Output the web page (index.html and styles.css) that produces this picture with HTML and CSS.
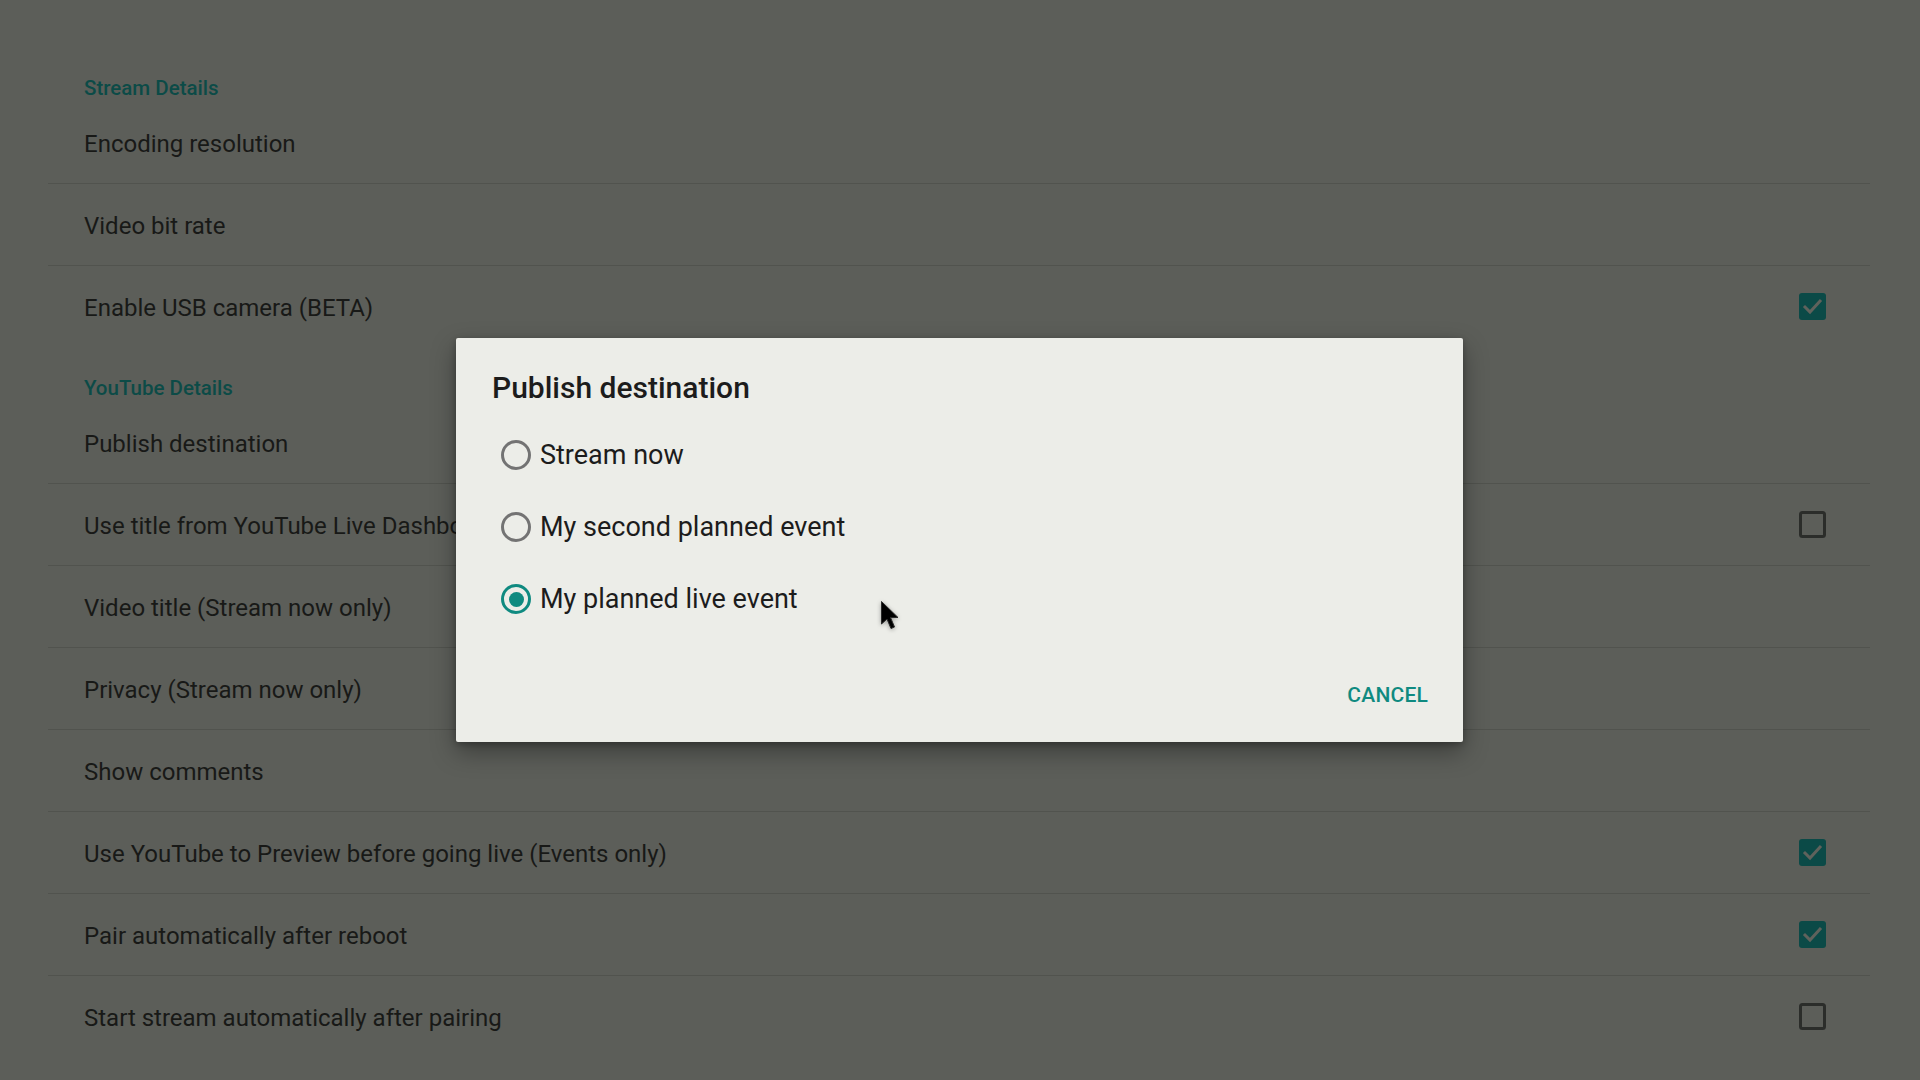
FILE: index.html
```html
<!DOCTYPE html>
<html>
<head>
<meta charset="utf-8">
<link rel="stylesheet" href="styles.css">
</head>
<body>
<div class="screen">
  <div class="prefs">
    <div class="category">Stream Details</div>
    <div class="row divided"><span class="label">Encoding resolution</span></div>
    <div class="row divided"><span class="label">Video bit rate</span></div>
    <div class="row"><span class="label">Enable USB camera (BETA)</span>
      <svg class="cb" width="27" height="27" viewBox="0 0 27 27"><rect x="0" y="0" width="27" height="27" rx="3" class="cb-fill"/><polyline points="6,14 11,19 21,8" class="cb-check"/></svg>
    </div>
    <div class="category">YouTube Details</div>
    <div class="row divided"><span class="label">Publish destination</span></div>
    <div class="row divided"><span class="label">Use title from YouTube Live Dashboard</span>
      <svg class="cb" width="27" height="27" viewBox="0 0 27 27"><rect x="1.5" y="1.5" width="24" height="24" rx="2" class="cb-empty"/></svg>
    </div>
    <div class="row divided"><span class="label">Video title (Stream now only)</span></div>
    <div class="row divided"><span class="label">Privacy (Stream now only)</span></div>
    <div class="row divided"><span class="label">Show comments</span></div>
    <div class="row divided"><span class="label">Use YouTube to Preview before going live (Events only)</span>
      <svg class="cb" width="27" height="27" viewBox="0 0 27 27"><rect x="0" y="0" width="27" height="27" rx="3" class="cb-fill"/><polyline points="6,14 11,19 21,8" class="cb-check"/></svg>
    </div>
    <div class="row divided"><span class="label">Pair automatically after reboot</span>
      <svg class="cb" width="27" height="27" viewBox="0 0 27 27"><rect x="0" y="0" width="27" height="27" rx="3" class="cb-fill"/><polyline points="6,14 11,19 21,8" class="cb-check"/></svg>
    </div>
    <div class="row"><span class="label">Start stream automatically after pairing</span>
      <svg class="cb" width="27" height="27" viewBox="0 0 27 27"><rect x="1.5" y="1.5" width="24" height="24" rx="2" class="cb-empty"/></svg>
    </div>
  </div>

  <div class="dialog">
    <div class="dialog-title">Publish destination</div>
    <div class="options">
      <div class="option"><span class="radio"></span><span class="opt-label">Stream now</span></div>
      <div class="option"><span class="radio"></span><span class="opt-label">My second planned event</span></div>
      <div class="option"><span class="radio checked"></span><span class="opt-label">My planned live event</span></div>
    </div>
    <div class="actions"><span class="btn">CANCEL</span></div>
  </div>

  <svg class="cursor" width="24" height="34" viewBox="0 0 24 34">
    <path d="M1.5 1.5 L1.5 24 L7 19 L11 28.5 L14.5 27 L10.5 17.5 L18 17.5 Z" fill="#000" stroke="#2a2a2a" stroke-width="1" stroke-linejoin="round"/>
  </svg>
</div>
</body>
</html>
```

FILE: styles.css
```css
html, body {
  margin: 0;
  padding: 0;
  width: 1920px;
  height: 1080px;
  overflow: hidden;
}
body {
  background: #5c5e59;
  font-family: Roboto, "Noto Sans", sans-serif;
}
.screen {
  position: relative;
  width: 1920px;
  height: 1080px;
}
.prefs {
  padding: 48px 50px 0 48px;
  display: flex;
  flex-direction: column;
}
.category {
  height: 54px;
  box-sizing: border-box;
  padding: 28px 0 0 36px;
  font-size: 20.5px;
  line-height: 24px;
  font-weight: 500;
  color: #0c4b47;
}
.row {
  height: 82px;
  box-sizing: border-box;
  display: flex;
  align-items: center;
  justify-content: space-between;
  padding: 2px 44px 0 36px;
}
.row.divided {
  border-bottom: 1px solid #51534e;
}
.label {
  font-size: 24px;
  color: #181917;
}
.cb { display: block; margin-top: -3px; }
.cb-fill { fill: #0b4a47; }
.cb-check { fill: none; stroke: #5f625c; stroke-width: 3; stroke-linecap: square; }
.cb-empty { fill: none; stroke: #2b2d2a; stroke-width: 3; }

.dialog {
  position: absolute;
  left: 456px;
  top: 338px;
  width: 1007px;
  height: 404px;
  box-sizing: border-box;
  background: #ecede8;
  border-radius: 2px;
  box-shadow: 0 10px 24px rgba(0,0,0,0.35), 0 2px 6px rgba(0,0,0,0.25);
  padding: 32px 0 21px;
  display: flex;
  flex-direction: column;
}
.dialog-title {
  padding: 0 37px 0 36px;
  font-size: 30px;
  line-height: 36px;
  font-weight: 500;
  color: #1c1c1c;
}
.options {
  margin-top: 13px;
  display: flex;
  flex-direction: column;
}
.option {
  height: 72px;
  display: flex;
  align-items: center;
  padding-left: 45px;
  gap: 9px;
}
.radio {
  width: 30px;
  height: 30px;
  box-sizing: border-box;
  border: 3px solid #737373;
  border-radius: 50%;
  position: relative;
}
.radio.checked {
  border-color: #0f8a80;
}
.radio.checked::after {
  content: "";
  position: absolute;
  left: 4.5px;
  top: 4.5px;
  width: 15px;
  height: 15px;
  border-radius: 50%;
  background: #0f8a80;
}
.opt-label {
  font-size: 27px;
  color: #1c1c1c;
}
.actions {
  margin-top: 32px;
  display: flex;
  justify-content: flex-end;
  padding-right: 23px;
}
.btn {
  height: 54px;
  display: flex;
  align-items: center;
  padding: 1px 12px 0;
  font-size: 21px;
  font-weight: 500;
  color: #0f8a80;
  letter-spacing: 0.2px;
}
.cursor {
  position: absolute;
  left: 880px;
  top: 600px;
  filter: drop-shadow(0 1px 2px rgba(0,0,0,0.35));
}
```
